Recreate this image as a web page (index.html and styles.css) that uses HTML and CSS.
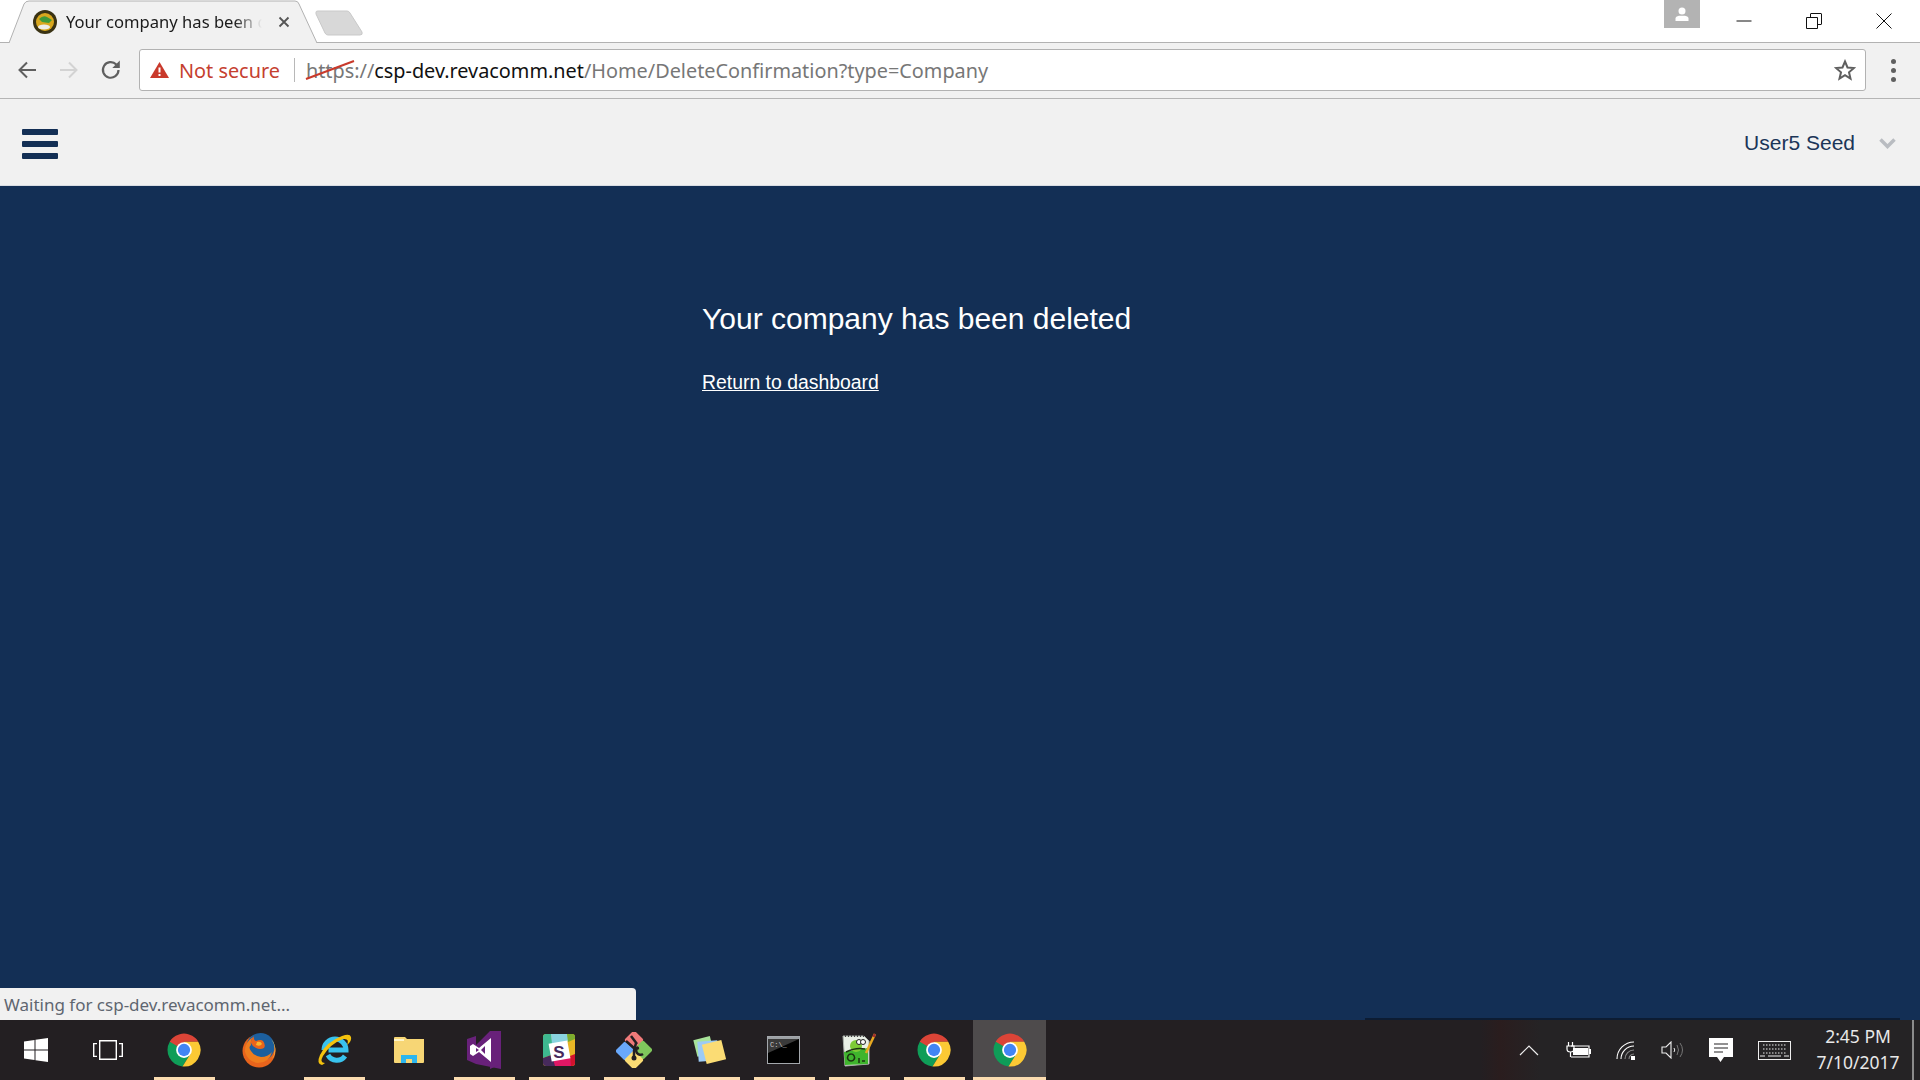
FILE: index.html
```html
<!DOCTYPE html>
<html lang="en">

<head>
  <meta charset="UTF-8">
  <meta name="viewport" content="width=device-width, initial-scale=1.0">
  <title>Your company has been deleted</title>
  <link rel="stylesheet" href="styles.css">
</head>

<body>
  <svg class="defs" width="0" height="0">
    <symbol id="chrome" viewBox="0 0 48 48">
      <path fill="#db4437" d="M24 24L15.3 29 5 13A22 22 0 0 1 43 13H24Z" />
      <path fill="#0f9d58" d="M24 24L5 13A22 22 0 0 0 22 46L32.7 29Z" />
      <path fill="#fcc934" d="M24 24L32.7 29 22 46A22 22 0 0 0 43 13H24Z" />
      <circle cx="24" cy="24" r="10.5" fill="#fff" />
      <circle cx="24" cy="24" r="8.2" fill="#4285f4" />
    </symbol>
  </svg>

  <div class="tabstrip">
    <div class="tab">
      <svg class="tab-shape" width="308" height="43" viewBox="0 0 308 43">
        <path d="M0 43L15 4Q16.500 1 20 1H286Q289 1 290 4L308 43" fill="#f1f1f1" stroke="#b2b2b2" />
      </svg>
      <svg class="favicon" width="24" height="24" viewBox="0 0 24 24">
        <circle cx="12" cy="12" r="12" fill="#3a3314" />
        <circle cx="12" cy="12" r="9" fill="#d9a81e" />
        <path d="M6 9Q10 5 14 7L19 10 16 13 9 12Z" fill="#3f9a3a" />
        <ellipse cx="11" cy="17" rx="6" ry="2.500" fill="#eeeeea" />
      </svg>
      <span class="tab-title">Your company has been deleted</span>
      <svg class="tab-close" width="12" height="12" viewBox="0 0 12 12">
        <path d="M1.500 1.500L10.500 10.500M10.500 1.500L1.500 10.500" stroke="#555" stroke-width="1.800" />
      </svg>
    </div>
    <svg class="new-tab" width="50" height="26" viewBox="0 0 50 26">
      <path d="M2 2Q2 1 4 1H33Q35 1 36 3L48 22Q49 25 46 25H14Q12 25 11 23L2 4Z" fill="#d8d8d8" stroke="#c9c9c9" />
    </svg>
    <div class="profile">
      <svg width="16" height="16" viewBox="0 0 16 16">
        <circle cx="8" cy="5" r="3.500" fill="#fff" />
        <path d="M1.500 15V12.500Q1.500 10.500 5 9.800H11Q14.500 10.500 14.500 12.500V15Z" fill="#fff" />
      </svg>
    </div>
    <div class="window-controls">
      <button class="win-btn">
        <svg width="16" height="16" viewBox="0 0 16 16"><path d="M0.500 8H15.500" stroke="#111" /></svg>
      </button>
      <button class="win-btn">
        <svg width="16" height="16" viewBox="0 0 16 16"><path d="M0.500 4.500H11.500V15.500H0.500ZM4.500 4.500V1Q4.500 0.500 5 0.500H15Q15.500 0.500 15.500 1V11Q15.500 11.500 15 11.500H11.500" fill="none" stroke="#111" /></svg>
      </button>
      <button class="win-btn">
        <svg width="16" height="16" viewBox="0 0 16 16"><path d="M0.500 0.500L15.500 15.500M15.500 0.500L0.500 15.500" stroke="#111" /></svg>
      </button>
    </div>
  </div>

  <div class="toolbar">
    <button class="tool-btn">
      <svg width="20" height="20" viewBox="0 0 20 20"><path d="M19 10H3M10 2.500L2.500 10 10 17.500" fill="none" stroke="#5f5f5f" stroke-width="2" /></svg>
    </button>
    <button class="tool-btn">
      <svg width="20" height="20" viewBox="0 0 20 20"><path d="M1 10H17M10 2.500L17.500 10 10 17.500" fill="none" stroke="#d3d3d3" stroke-width="2" /></svg>
    </button>
    <button class="tool-btn">
      <svg width="22" height="22" viewBox="0 0 22 22"><path d="M18.500 11A7.800 7.800 0 1 1 16.300 5.500" fill="none" stroke="#5f5f5f" stroke-width="2.200" /><path d="M19.800 1.500V9H12.300Z" fill="#5f5f5f" /></svg>
    </button>
    <div class="omnibox">
      <svg class="warning" width="19" height="16" viewBox="0 0 19 16">
        <path d="M9.500 0L19 16H0Z" fill="#c9392b" />
        <path d="M8.500 5.500H10.500V10.500H8.500ZM8.500 12H10.500V14H8.500Z" fill="#fff" />
      </svg>
      <span class="not-secure">Not secure</span>
      <span class="omni-sep"></span>
      <span class="url">
        <span class="url-scheme">https<svg class="strike" width="50" height="20" viewBox="0 0 50 20"><path d="M1 19L49 1" stroke="#c9392b" stroke-width="2" /></svg></span><span class="url-dim">://</span>csp-dev.revacomm.net<span class="url-dim">/Home/DeleteConfirmation?type=Company</span>
      </span>
      <svg class="star" width="22" height="22" viewBox="0 0 22 22">
        <path d="M11 2.500L13.500 8.500 20 9 15 13.300 16.500 19.600 11 16.200 5.500 19.600 7 13.300 2 9 8.500 8.500Z" fill="none" stroke="#5f5f5f" stroke-width="2" />
      </svg>
    </div>
    <div class="menu-dots"><i></i><i></i><i></i></div>
  </div>

  <header class="navbar">
    <div class="hamburger"><i></i><i></i><i></i></div>
    <div class="user-menu">
      <span class="user-name">User5 Seed</span>
      <svg width="17" height="11" viewBox="0 0 17 11"><path d="M1.500 1.500L8.500 8.500 15.500 1.500" fill="none" stroke="#b9bcc1" stroke-width="3.500" /></svg>
    </div>
  </header>

  <main class="content">
    <div class="message">
      <h1 class="message-title">Your company has been deleted</h1>
      <a class="message-link" href="#">Return to dashboard</a>
    </div>
    <div class="status-bubble">Waiting for csp-dev.revacomm.net...</div>
  </main>

  <footer class="taskbar">
    <div class="start-btn">
      <svg width="24" height="24" viewBox="0 0 24 24"><path d="M0 3.500L10.500 2V11.500H0ZM11.500 1.800L24 0V11.500H11.500ZM0 12.500H10.500V22L0 20.500ZM11.500 12.500H24V24L11.500 22.200Z" fill="#fff" /></svg>
    </div>
    <div class="taskview-btn">
      <svg width="30" height="20" viewBox="0 0 30 20"><path d="M6.700 0.700H23.300V19.300H6.700ZM4 3.600H0.700V16.400H4M26 3.600H29.300V16.400H26" fill="none" stroke="#fff" stroke-width="1.400" /></svg>
    </div>

    <div class="task-item running"><svg width="36" height="36"><use href="#chrome" /></svg></div>
    <div class="task-item">
      <svg width="34" height="36" viewBox="0 0 34 36">
        <circle cx="17" cy="19" r="16.500" fill="#e8641c" />
        <circle cx="18.500" cy="15" r="14" fill="#1c5f9e" />
        <path d="M29 7A15 15 0 0 1 30 27 17 17 0 0 0 29 7Z" fill="#f7c948" />
        <path d="M11 5Q8 9 9 13 6 15 9 19 12 24 19 25 26 25 30 20 27 31 16 31 6 30 3 20 2 11 11 5Z" fill="#ef7d1e" />
        <path d="M12 4Q11 8 14 9 19 7 21 9 24 13 22 16 18 18 14 16 10 14 9 11 8 8 12 4Z" fill="#e8641c" />
        <path d="M15 10Q19 9 20 12 18 15 14 13Z" fill="#f9b62c" />
      </svg>
    </div>
    <div class="task-item running">
      <svg width="36" height="36" viewBox="0 0 36 36">
        <path d="M8 18A11 11 0 0 1 30 18H12.500M12 23A10 10 0 0 0 29 24" fill="none" stroke="#39c3ee" stroke-width="5" />
        <path d="M6 33Q0 32 4 23 10 10 26 4 34 1 35 5 36 9 31 13 34 6 27 7 14 12 7 24 3 31 9 31Q6 33 6 33Z" fill="#f4c20d" />
      </svg>
    </div>
    <div class="task-item">
      <svg width="32" height="28" viewBox="0 0 32 28">
        <path d="M1 2Q1 1 2 1H12L14 3H31V26Q31 27 30 27H2Q1 27 1 26Z" fill="#f7d675" />
        <path d="M1 3H11V5H1Z" fill="#fff5c8" />
        <path d="M8 27V19H24V27H19V23H13V27Z" fill="#2cb6ef" />
      </svg>
    </div>
    <div class="task-item running">
      <svg width="34" height="38" viewBox="0 0 34 38">
        <path d="M0 8L9 5 9 33 0 29ZM9 33L34 38V0L23 0 9 14Z" fill="#68217a" />
        <path d="M23 0L34 5V33L23 38Z" fill="#68217a" />
        <path d="M6 13L12 17 24 7V31L12 21 6 25 3 23V15Z" fill="#fff" />
        <path d="M9 17V21L12 19ZM18 15V23L14 19Z" fill="#68217a" />
      </svg>
    </div>
    <div class="task-item running">
      <svg width="32" height="32" viewBox="0 0 32 32">
        <rect width="32" height="32" rx="3" fill="#e8b625" />
        <path d="M0 3Q0 0 3 0H8L11 20 0 24Z" fill="#3eb890" />
        <path d="M8 0H24L26 7 9 10Z" fill="#89d3df" />
        <path d="M24 0H29Q32 0 32 3V5L25 8Z" fill="#7cac2e" />
        <path d="M0 24L11 20 13 32H3Q0 32 0 29Z" fill="#472a5c" />
        <path d="M10 25L27 22 29 32H12Z" fill="#e01765" />
        <path d="M27 22L32 20V29Q32 32 29 32H28Z" fill="#d2122e" />
        <rect x="7" y="8" width="19" height="18" fill="#fff" transform="rotate(-10 16 17)" />
        <text class="slack-s" x="16" y="23.500" text-anchor="middle">S</text>
      </svg>
    </div>
    <div class="task-item running">
      <svg width="36" height="36" viewBox="0 0 36 36">
        <rect x="-7" y="-7" width="14" height="14" rx="2" fill="#f07a7a" transform="translate(18 8) rotate(45)" />
        <rect x="-7" y="-7" width="14" height="14" rx="2" fill="#69a8fb" transform="translate(9 19) rotate(45)" />
        <rect x="-7" y="-7" width="14" height="14" rx="2" fill="#7fc65c" transform="translate(27 18) rotate(45)" />
        <rect x="-7" y="-7" width="14" height="14" rx="2" fill="#fbdc74" transform="translate(18 28) rotate(45)" />
        <path d="M10 9L18 16M15 4L21 12M20 11L18 19 18 25M18 17L23 16" fill="none" stroke="#231f22" stroke-width="2.500" />
        <path d="M22 15A4 4 0 1 0 27 22" fill="none" stroke="#231f22" stroke-width="2.500" />
        <circle cx="18" cy="26" r="2.500" fill="#231f22" />
      </svg>
    </div>
    <div class="task-item running">
      <svg width="34" height="30" viewBox="0 0 34 30">
        <rect x="3" y="3" width="17" height="17" fill="#a8e39a" transform="rotate(-14 11 11)" />
        <rect x="6" y="6" width="20" height="20" fill="#9ccbf5" transform="rotate(-4 16 16)" />
        <rect x="12" y="7" width="20" height="20" fill="#fbdc74" transform="rotate(-14 22 17)" />
      </svg>
    </div>
    <div class="task-item running">
      <svg width="33" height="28" viewBox="0 0 33 28">
        <rect x="0.500" y="0.500" width="32" height="27" fill="#000" stroke="#a4a8ad" />
        <path d="M1 1H32V3H1Z" fill="#9ca0a4" />
        <path d="M1 3H32L1 17Z" fill="#3a3a3a" />
        <text class="cmd-prompt" x="3" y="11">C:\_</text>
      </svg>
    </div>
    <div class="task-item running">
      <svg width="34" height="34" viewBox="0 0 34 34">
        <path d="M1 3H22L27 8V31L3 33Z" fill="#e9efe6" stroke="#aab0aa" />
        <path d="M3 3H22" stroke="#444" stroke-dasharray="1 2" stroke-width="2" />
        <path d="M2 19L26 15V31L3 32Z" fill="#3fb52d" />
        <circle cx="14" cy="13" r="6" fill="#7ecb37" />
        <circle cx="17" cy="9" r="2.500" fill="#fff" stroke="#222" />
        <circle cx="21" cy="9" r="2.500" fill="#fff" stroke="#222" />
        <path d="M4 19Q14 14 23 16M9 21A3.500 3.500 0 1 0 9.100 21M17 25V30M20 28H23" fill="none" stroke="#1c3312" stroke-width="1.500" />
        <path d="M33 1L24 20" stroke="#e7a821" stroke-width="2.500" />
        <path d="M33 1L31.500 4" stroke="#a32f2f" stroke-width="2.500" />
      </svg>
    </div>
    <div class="task-item running"><svg width="36" height="36"><use href="#chrome" /></svg></div>
    <div class="task-item running active"><svg width="36" height="36"><use href="#chrome" /></svg></div>

    <div class="tray">
      <svg class="tray-icon tray-first" width="20" height="11" viewBox="0 0 20 11"><path d="M1 10L10 1 19 10" fill="none" stroke="#eee" stroke-width="1.200" /></svg>
      <svg class="tray-icon" width="25" height="18" viewBox="0 0 25 18">
        <path d="M5 5H23V16H5" fill="none" stroke="#fff" stroke-width="1.200" />
        <rect x="7" y="7" width="15" height="7" fill="#fff" />
        <rect x="23" y="8" width="2" height="5" fill="#fff" />
        <path d="M1 5H8V8Q8 11 4.500 11 1 11 1 8ZM4.500 11V16M2.500 1V5M6.500 1V5" fill="none" stroke="#fff" stroke-width="1.200" />
      </svg>
      <svg class="tray-icon" width="20" height="20" viewBox="0 0 20 20">
        <path d="M1 19A17 17 0 0 1 18 2M5 19A13 13 0 0 1 18 6" fill="none" stroke="#fff" stroke-width="1.100" />
        <path d="M9 19A9 9 0 0 1 18 10M13 19A5 5 0 0 1 18 14" fill="none" stroke="#8a8a8a" stroke-width="1.100" />
        <rect x="15" y="16" width="4" height="4" fill="#fff" />
      </svg>
      <svg class="tray-icon" width="23" height="18" viewBox="0 0 23 18">
        <path d="M1 6H5L10 1V17L5 12H1Z" fill="none" stroke="#eee" stroke-width="1.100" />
        <path d="M13 7Q14.500 9 13 11" fill="none" stroke="#eee" />
        <path d="M16 4Q19 9 16 14M19 2Q24 9 19 16" fill="none" stroke="#777" />
      </svg>
      <svg class="tray-icon" width="24" height="24" viewBox="0 0 24 24">
        <path d="M0 0H24V19H15L11.500 24 8 19H0Z" fill="#fff" />
        <path d="M5 6H19M5 10H19M5 14H14" stroke="#252325" stroke-width="1.200" />
      </svg>
      <svg class="tray-icon" width="33" height="19" viewBox="0 0 33 19">
        <rect x="0.500" y="0.500" width="32" height="18" fill="none" stroke="#eee" />
        <path d="M5 4H29M5 8H29M5 12H29" stroke="#eee" stroke-dasharray="1.500 1.500" />
        <path d="M2 15H7M10 15H23M26 15H31" stroke="#eee" />
      </svg>
      <div class="clock">
        <span>2:45 PM</span>
        <span>7/10/2017</span>
      </div>
      <div class="show-desktop"></div>
    </div>
  </footer>
</body>

</html>
```

FILE: styles.css
```css
* {
  box-sizing: border-box;
}

body {
  display: flex;
  flex-direction: column;
  height: 100vh;
  margin: 0;
  overflow: hidden;
  font-family: "Liberation Sans", Arial, sans-serif;
  background-color: #132f55;
}

button {
  padding: 0;
  border: none;
  background: none;
}

.defs {
  position: absolute;
}

/* browser tabs */
.tabstrip {
  display: flex;
  flex: none;
  align-items: flex-start;
  height: 43px;
  padding-left: 9px;
  background-color: #fff;
  border-bottom: 1px solid #b2b2b2;
  font-family: "Noto Sans", "Open Sans", sans-serif;
}

.tab {
  position: relative;
  display: flex;
  align-items: center;
  width: 308px;
  height: 43px;
  padding: 0 27px 0 24px;
}

.tab-shape {
  position: absolute;
  top: 0;
  left: 0;
}

.favicon,
.tab-title,
.tab-close {
  position: relative;
}

.favicon {
  flex: none;
}

.tab-title {
  flex: 1;
  margin: 0 12px 0 9px;
  overflow: hidden;
  white-space: nowrap;
  font-size: 16.6px;
  color: #1b1b1b;
  -webkit-mask-image: linear-gradient(90deg, #000 84%, transparent 98%);
  mask-image: linear-gradient(90deg, #000 84%, transparent 98%);
}

.tab-close {
  flex: none;
}

.new-tab {
  margin: 10px 0 0 -3px;
}

.profile {
  display: flex;
  align-items: center;
  justify-content: center;
  width: 36px;
  height: 28px;
  margin-left: auto;
  background-color: #b3b3b3;
}

.window-controls {
  display: flex;
  margin-left: 9px;
  margin-right: 1px;
}

.win-btn {
  display: flex;
  align-items: center;
  justify-content: center;
  width: 70px;
  height: 41px;
}

/* toolbar */
.toolbar {
  display: flex;
  flex: none;
  align-items: center;
  height: 56px;
  padding: 0 0 1px 6px;
  background-color: #f1f1f1;
  border-bottom: 1px solid #b5b5b5;
}

.tool-btn {
  display: flex;
  flex: none;
  align-items: center;
  justify-content: center;
  width: 42px;
  height: 42px;
}

.omnibox {
  display: flex;
  flex: 1;
  align-items: center;
  height: 42px;
  margin-left: 7px;
  padding: 0 9px 0 10px;
  background-color: #fff;
  border: 1px solid #b2b2b2;
  border-radius: 3px;
  font-family: "Noto Sans", "Open Sans", sans-serif;
  font-size: 19.85px;
}

.not-secure {
  margin-left: 10px;
  color: #c5402f;
}

.omni-sep {
  width: 1px;
  height: 24px;
  margin: 0 11px 0 14px;
  background-color: #b8b8b8;
}

.url {
  flex: 1;
  white-space: nowrap;
  color: #111;
}

.url-scheme {
  position: relative;
  color: #777;
}

.strike {
  position: absolute;
  left: -1px;
  top: 3px;
}

.url-dim {
  color: #777;
}

.menu-dots {
  display: flex;
  flex: none;
  flex-direction: column;
  align-items: center;
  gap: 4px;
  width: 54px;
}

.menu-dots i {
  width: 5px;
  height: 5px;
  border-radius: 50%;
  background-color: #5f5f5f;
}

/* site header */
.navbar {
  display: flex;
  flex: none;
  align-items: center;
  justify-content: space-between;
  height: 87px;
  padding: 0 24px 0 22px;
  background-color: #f1f1f1;
  border-bottom: 1px solid #d9dde3;
}

.hamburger {
  display: flex;
  flex-direction: column;
  gap: 6px;
  width: 36px;
  margin-top: 4px;
}

.hamburger i {
  height: 6px;
  border-radius: 1px;
  background-color: #132f55;
}

.user-menu {
  display: flex;
  align-items: center;
  gap: 24px;
  margin-top: 2px;
}

.user-name {
  font-size: 21px;
  color: #1b3558;
}

.content {
  position: relative;
  flex: 1;
  padding-top: 115px;
  background-color: #132f55;
}

.message {
  width: 516px;
  margin: 0 auto;
  color: #fff;
}

.message-title {
  margin: 0 0 34px;
  font-size: 30px;
  font-weight: normal;
  line-height: 36px;
}

.message-link {
  font-size: 19.4px;
  color: #fff;
}

.status-bubble {
  position: absolute;
  left: 0;
  bottom: 0;
  width: 636px;
  height: 32px;
  padding: 5px 4px 0;
  background-color: #f1f1f1;
  border-top-right-radius: 4px;
  font-family: "Noto Sans", "Open Sans", sans-serif;
  font-size: 17px;
  line-height: 24px;
  white-space: nowrap;
  color: #5f6670;
}

/* windows taskbar */
.taskbar {
  position: relative;
  display: flex;
  flex: none;
  align-items: stretch;
  height: 60px;
  background: linear-gradient(90deg, #231f22 1480px, #2a1d1e 1500px, #252325 1540px);
}

.taskbar::before {
  content: "";
  position: absolute;
  left: 1365px;
  width: 535px;
  top: -2px;
  height: 2px;
  background-color: #0c1c33;
}

.start-btn,
.taskview-btn,
.task-item {
  display: flex;
  align-items: center;
  justify-content: center;
}

.start-btn {
  width: 72px;
}

.taskview-btn {
  width: 75px;
  padding-right: 3px;
}

.task-item {
  position: relative;
  width: 75px;
  padding-right: 2px;
}

.task-item.running::after {
  content: "";
  position: absolute;
  left: 7px;
  right: 7px;
  bottom: 0;
  height: 3px;
  background-color: #fbdcb0;
}

.task-item.active {
  background-color: #4e4b4c;
  background-clip: content-box;
  padding: 0 1px;
}

.task-item.active::after {
  left: 1px;
  right: 1px;
}

.slack-s {
  font-family: "Liberation Sans", sans-serif;
  font-size: 17px;
  font-weight: bold;
  fill: #472a5c;
}

.cmd-prompt {
  font-family: "Liberation Mono", monospace;
  font-size: 7px;
  fill: #ccc;
}

.tray {
  display: flex;
  align-items: center;
  margin-left: auto;
  color: #e8e8e8;
}

.tray-icon {
  flex: none;
  margin-right: 25px;
}

.tray-first {
  margin-right: 27px;
}

.clock {
  display: flex;
  flex-direction: column;
  align-items: center;
  width: 100px;
  margin-left: -8px;
  margin-top: -2px;
  font-family: "Noto Sans", "Open Sans", sans-serif;
  font-size: 17.5px;
  line-height: 26px;
}

.show-desktop {
  width: 2px;
  height: 100%;
  margin-left: 4px;
  margin-right: 6px;
  background-color: #8b8b8b;
}
```
